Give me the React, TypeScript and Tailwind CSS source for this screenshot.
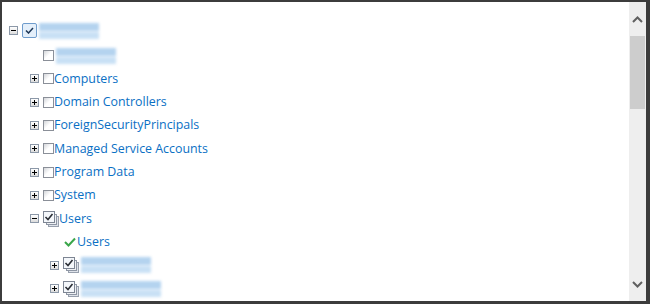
import React from "react";

function ExpandBox({ open }: { open?: boolean }) {
  return (
    <span className="relative flex h-[9px] w-[9px] shrink-0 items-center justify-center border border-[#8c98a8] bg-gradient-to-b from-white to-[#dcdcdc]">
      <span className="absolute h-px w-[5px] bg-black" />
      {!open && <span className="absolute h-[5px] w-px bg-black" />}
    </span>
  );
}

function Box() {
  return <span className="block h-[11px] w-[11px] shrink-0 border border-[#8a8f98] bg-gradient-to-br from-[#d4d6da] via-white to-white" />;
}

function StackCheck() {
  return (
    <svg width="16" height="16" viewBox="0 0 16 16" className="block shrink-0">
      <rect x="5.5" y="5.5" width="10" height="10" fill="#dfe3ea" stroke="#98a0ad" />
      <rect x="3.5" y="3.5" width="10" height="10" fill="#eef0f3" stroke="#8e96a4" />
      <rect x="0.5" y="0.5" width="11" height="11" fill="#f4f7fb" stroke="#7d8593" />
      <path d="M2.5 6 L5 8.5 L9.5 3" fill="none" stroke="#2b2f36" strokeWidth="1.6" />
    </svg>
  );
}

function Blur({ w }: { w: number }) {
  return (
    <span className="ml-[2px] flex h-[18px] flex-col justify-center gap-px blur-[1.5px]" style={{ width: w }}>
      <span className="h-[8px] w-full bg-[#b4d3ef]" />
      <span className="h-[7px] w-full bg-[#c8e0f5]" />
    </span>
  );
}

const rows = ["Computers", "Domain Controllers", "ForeignSecurityPrincipals", "Managed Service Accounts", "Program Data", "System"];

export default function App() {
  return (
    <div
      className="flex h-[304px] w-[650px] border-t-2 border-l-2 border-r-4 border-b-[3px] border-[#3c3c3c] bg-white text-[12.4px] text-[#0a6fc4]"
      style={{ fontFamily: '"Open Sans", "Noto Sans", sans-serif' }}
    >
      {/* tree */}
      <div className="flex-1 overflow-hidden pt-[15px]">
        <div className="flex h-[27px] items-center pl-[7px]">
          <ExpandBox open />
          <span className="ml-[4px] flex h-[15px] w-[15px] items-center justify-center rounded-[2px] border border-[#6f9ccc] bg-[#e4effa]">
            <svg width="9" height="7" viewBox="0 0 9 7">
              <path d="M1 3.5 L3.5 6 L8 1" fill="none" stroke="#1d3656" strokeWidth="1.5" />
            </svg>
          </span>
          <Blur w={60} />
        </div>
        <div className="flex h-[23.3px] items-center pl-[41px]">
          <Box />
          <Blur w={60} />
        </div>
        {rows.map((r) => (
          <div key={r} className="flex h-[23.3px] items-center pl-[28px]">
            <ExpandBox />
            <span className="ml-[4px] flex"><Box /></span>
            <span className="leading-none">{r}</span>
          </div>
        ))}
        <div className="flex h-[23.3px] items-center pl-[28px]">
          <ExpandBox open />
          <span className="ml-[4px] flex"><StackCheck /></span>
          <span className="leading-none">Users</span>
        </div>
        <div className="flex h-[23.3px] items-center pl-[61px]">
          <svg width="14" height="14" viewBox="0 0 14 14" className="shrink-0">
            <path d="M2 7 L5.5 10.5 L12 3.5" fill="none" stroke="#3aa64a" strokeWidth="2" />
          </svg>
          <span className="leading-none">Users</span>
        </div>
        {[70, 80].map((w, i) => (
          <div key={i} className="flex h-[23.3px] items-center pl-[48px]">
            <ExpandBox />
            <span className="ml-[4px] flex"><StackCheck /></span>
            <Blur w={w} />
          </div>
        ))}
        <div className="flex h-[23.3px] items-center pl-[63px]">
          <StackCheck />
        </div>
      </div>

      {/* scrollbar */}
      <div className="flex w-[17px] flex-col bg-[#eeeeee]">
        <div className="flex h-[34px] items-center justify-center">
          <svg width="11" height="7" viewBox="0 0 11 7">
            <path d="M1 6 L5.5 1.5 L10 6" fill="none" stroke="#606060" strokeWidth="2" />
          </svg>
        </div>
        <div className="mx-px h-[73px] bg-[#cdcdcd]" />
        <div className="flex-1" />
        <div className="flex h-[34px] items-center justify-center">
          <svg width="11" height="7" viewBox="0 0 11 7">
            <path d="M1 1 L5.5 5.5 L10 1" fill="none" stroke="#606060" strokeWidth="2" />
          </svg>
        </div>
      </div>
    </div>
  );
}
